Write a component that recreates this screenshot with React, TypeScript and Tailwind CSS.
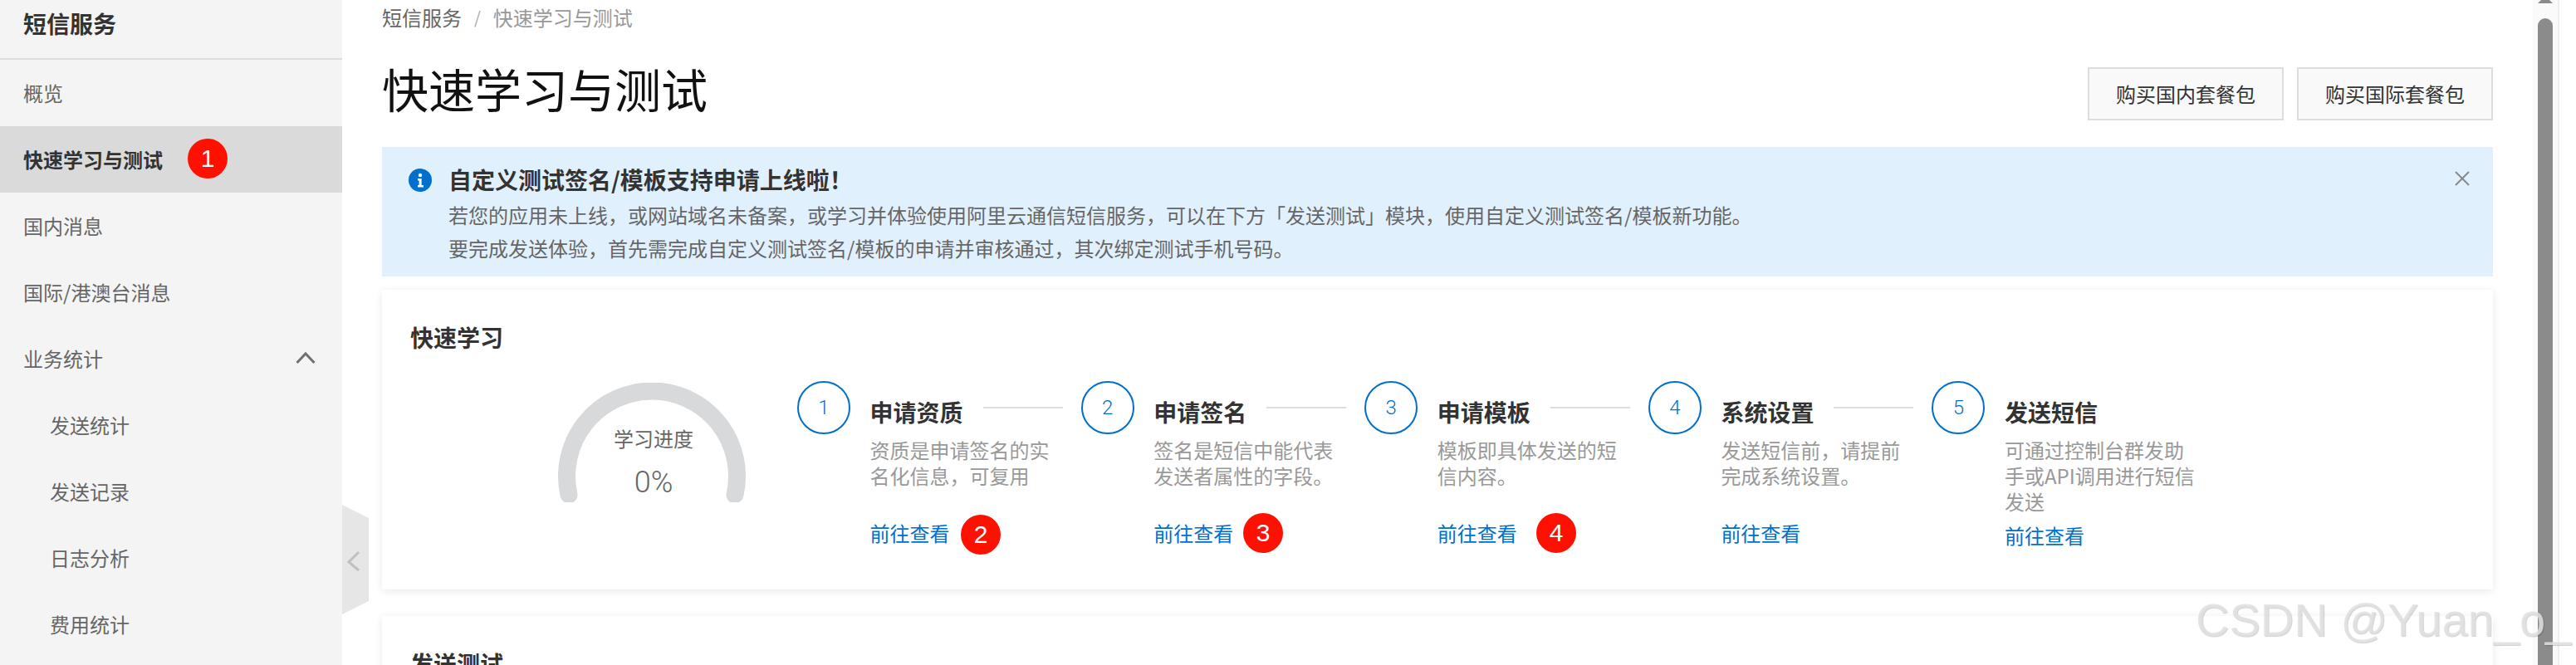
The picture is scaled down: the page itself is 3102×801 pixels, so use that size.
import React from "react";

const navItems = ["概览", "快速学习与测试", "国内消息", "国际/港澳台消息", "业务统计", "发送统计", "发送记录", "日志分析", "费用统计"];

const steps = [
  { n: 1, title: "申请资质", desc: "资质是申请签名的实名化信息，可复用", linkClass: "mt-[34px]", last: false },
  { n: 2, title: "申请签名", desc: "签名是短信中能代表发送者属性的字段。", linkClass: "mt-[34px]", last: false },
  { n: 3, title: "申请模板", desc: "模板即具体发送的短信内容。", linkClass: "mt-[34px]", last: false },
  { n: 4, title: "系统设置", desc: "发送短信前，请提前完成系统设置。", linkClass: "mt-[34px]", last: false },
  { n: 5, title: "发送短信", desc: "可通过控制台群发助手或API调用进行短信发送", linkClass: "mt-[6px]", last: true },
];

function Badge({ n, className }: { n: number; className: string }) {
  return (
    <div className={`absolute flex h-[48px] w-[48px] items-center justify-center rounded-full bg-[#ff1000] font-['Liberation_Sans',sans-serif] text-[30px] leading-none text-white ${className}`}>
      {n}
    </div>
  );
}

function Sidebar() {
  return (
    <aside className="h-[801px] w-[412px] shrink-0 overflow-hidden bg-[#f4f4f4]">
      <div className="flex h-[72px] items-center border-b-2 border-[#dddddd] pb-[14px] pl-[28px] text-[28px] font-bold text-[#333333]">
        短信服务
      </div>
      {navItems.map((item, i) => (
        <div
          key={item}
          className={
            i === 1
              ? "flex h-[80px] items-center bg-[#dadada] pl-[28px] text-[24px] font-bold text-[#333333]"
              : i > 4
                ? "flex h-[80px] items-center pl-[60px] text-[24px] text-[#666666]"
                : "flex h-[80px] items-center justify-between pl-[28px] pr-[32px] text-[24px] text-[#666666]"
          }
        >
          <span>{item}</span>
          {i === 4 && (
            <svg width="24" height="16" viewBox="0 0 24 16" fill="none" stroke="#707070" strokeWidth="3" className="mb-[2px]">
              <polyline points="1.5,14 12,3 22.5,14" />
            </svg>
          )}
        </div>
      ))}
    </aside>
  );
}

function Gauge() {
  return (
    <div className="relative mt-[2px] h-[144px] w-[226px] shrink-0">
      <svg width="226" height="144" viewBox="0 0 226 144" className="absolute left-0 top-0" fill="none">
        <path d="M13 135 A102.5 102.5 0 1 1 213 135" stroke="#d8d9db" strokeWidth="21" strokeLinecap="round" />
      </svg>
      <div className="relative flex flex-col items-center pl-[4px] pt-[47px] text-[#666666]">
        <div className="text-[24px] leading-[40px]">学习进度</div>
        <div className="mt-[13px] font-['Roboto',sans-serif] text-[36px] font-light leading-[40px]">0%</div>
      </div>
    </div>
  );
}

function Step({ n, title, desc, linkClass, last }: (typeof steps)[number]) {
  return (
    <div className="flex w-[341.6px] shrink-0 gap-[23.6px]">
      <div className="flex h-[64px] w-[64px] shrink-0 items-center justify-center rounded-full border-2 border-[#0070cc] font-['Roboto',sans-serif] text-[24px] font-light text-[#0070cc]">
        {n}
      </div>
      <div className="flex-1 pr-[24px] pt-[17px]">
        <div className="flex items-start gap-[24px]">
          <div className="text-[28px] font-bold leading-[40px] text-[#333333]">{title}</div>
          {!last && <div className="mt-[14px] h-[2px] flex-1 bg-[#dddddd]" />}
        </div>
        <div className="mt-[10px] w-[232px] text-[24px] leading-[31px] text-[#999999]">{desc}</div>
        <div className={`${linkClass} text-[24px] leading-[40px] text-[#0070cc]`}>前往查看</div>
      </div>
    </div>
  );
}

export default function App() {
  return (
    <div className="relative flex h-[801px] w-[3102px] overflow-hidden bg-white font-['Noto_Sans_CJK_SC','Liberation_Sans',sans-serif]">
      <Sidebar />

      <main className="h-[801px] flex-1 overflow-hidden px-[48px]">
        <div className="flex h-[42px] items-center text-[24px]">
          <span className="text-[#666666]">短信服务</span>
          <span className="mx-[15px] text-[20px] text-[#aaaaaa]">/</span>
          <span className="text-[#999999]">快速学习与测试</span>
        </div>

        <div className="mb-[32px] mt-[39px] flex h-[64px] items-start justify-between">
          <h1 className="text-[56px] font-normal leading-[50px] text-[#111111]">快速学习与测试</h1>
          <div className="flex gap-[16px]">
            <button className="h-[64px] w-[236px] border-2 border-[#dddddd] bg-[#f9f9f9] text-[24px] text-[#333333]">购买国内套餐包</button>
            <button className="h-[64px] w-[236px] border-2 border-[#dddddd] bg-[#f9f9f9] text-[24px] text-[#333333]">购买国际套餐包</button>
          </div>
        </div>

        <div className="flex h-[156px] bg-[#e1f0fd] pl-[32px] pr-[28px] pt-[19px]">
          <svg width="28" height="28" viewBox="0 0 28 28" className="mt-[7px] shrink-0">
            <circle cx="14" cy="14" r="14" fill="#0070cc" />
            <circle cx="14" cy="8" r="2.2" fill="#ffffff" />
            <path d="M11 12h4.6v8H18v2.5h-7V20h1.6v-5.5H11z" fill="#ffffff" />
          </svg>
          <div className="ml-[20px] flex-1">
            <div className="text-[28px] font-bold leading-[40px] text-[#333333]">自定义测试签名/模板支持申请上线啦！</div>
            <div className="mt-[3px] text-[24px] leading-[40px] text-[#666666]">
              <div>若您的应用未上线，或网站域名未备案，或学习并体验使用阿里云通信短信服务，可以在下方「发送测试」模块，使用自定义测试签名/模板新功能。</div>
              <div>要完成发送体验，首先需完成自定义测试签名/模板的申请并审核通过，其次绑定测试手机号码。</div>
            </div>
          </div>
          <svg width="18" height="18" viewBox="0 0 18 18" stroke="#888888" strokeWidth="2" className="mt-[10px] shrink-0">
            <line x1="1" y1="1" x2="17" y2="17" />
            <line x1="17" y1="1" x2="1" y2="17" />
          </svg>
        </div>

        <section className="mt-[16px] h-[361px] bg-white px-[34px] pt-[37px] shadow-[0_2px_10px_rgba(0,0,0,0.09)]">
          <div className="text-[28px] font-bold leading-[40px] text-[#333333]">快速学习</div>
          <div className="ml-[178px] mt-[33px] flex">
            <Gauge />
            <div className="ml-[62px] flex">
              {steps.map((s) => (
                <Step key={s.n} {...s} />
              ))}
            </div>
          </div>
        </section>

        <section className="mt-[32px] h-[200px] bg-white px-[34px] pt-[37px] shadow-[0_2px_10px_rgba(0,0,0,0.09)]">
          <div className="text-[28px] font-bold leading-[40px] text-[#333333]">发送测试</div>
        </section>
      </main>

      <div className="flex h-[801px] w-[52px] shrink-0">
        <div className="relative h-full w-[32px] border-r-2 border-[#eeeeee] bg-[#fafafa]">
          <svg width="18" height="4" viewBox="0 0 18 4" className="absolute left-[6px] top-0">
            <polygon points="0,4 18,4 9,-5" fill="#8b8b8b" />
          </svg>
          <div className="absolute bottom-0 left-[6px] top-[22px] w-[18px] rounded-t-[9px] bg-[#8b8b8b]" />
        </div>
      </div>

      <svg width="32" height="132" viewBox="0 0 32 132" className="absolute left-[412px] top-[608px]">
        <polygon points="0,0 32,16 32,116 0,132" fill="#e6e6e6" />
        <polyline points="20,57 8,69 20,79" fill="none" stroke="#c0c0c0" strokeWidth="3" />
      </svg>

      <Badge n={1} className="left-[226px] top-[167px]" />
      <Badge n={2} className="left-[1157px] top-[620px]" />
      <Badge n={3} className="left-[1497px] top-[618px]" />
      <Badge n={4} className="left-[1850px] top-[618px]" />

      <div className="absolute left-[2644px] top-[711px] whitespace-nowrap font-['Liberation_Sans',sans-serif] text-[56px] leading-[72px] text-[#e3e3e3]/85 [text-shadow:1px_1px_1px_rgba(0,0,0,0.18)]">
        CSDN @Yuan_o_
      </div>
    </div>
  );
}
